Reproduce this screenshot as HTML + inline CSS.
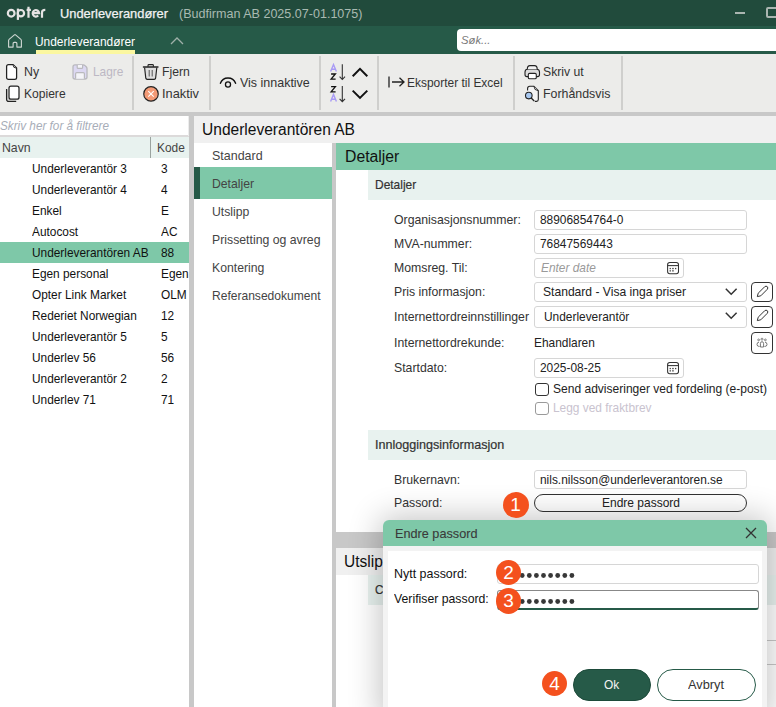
<!DOCTYPE html>
<html><head><meta charset="utf-8"><style>
html,body{margin:0;padding:0;width:776px;height:707px;overflow:hidden;background:#fff;font-family:"Liberation Sans", sans-serif;position:relative}
</style></head><body>
<div style="position:absolute;left:0px;top:0px;width:776px;height:26px;background:#214b3c;"></div>
<svg style="position:absolute;left:0px;top:0px;" width="56" height="26" viewBox="0 0 56 26"><g fill="none" stroke="#e6e4e4" stroke-width="2.2"><circle cx="11.2" cy="13.2" r="3.35"/><path d="M17.9 8.6 V19.9"/><circle cx="20.9" cy="13.2" r="3.2"/><path d="M28.5 6.8 V17.8 M26.6 9.9 H30.9"/><path d="M32.7 13.2 H39.1 A3.2 3.2 0 1 0 38.2 15.6"/><path d="M42 17.8 V12.4 Q42 9.9 45.3 9.9"/></g></svg>
<div style="position:absolute;left:59.80px;top:8.00px;line-height:12.6px;font-size:12.6px;color:#f2f2f2;font-weight:normal;font-style:normal;white-space:nowrap;transform-origin:0 0;transform:scaleX(1.0217);-webkit-text-stroke:0.25px #f2f2f2;">Underleverandører</div>
<div style="position:absolute;left:179.00px;top:8.00px;line-height:12.6px;font-size:12.6px;color:#a9bab2;font-weight:normal;font-style:normal;white-space:nowrap;transform-origin:0 0;transform:scaleX(0.9965);">(Budfirman AB 2025.07-01.1075)</div>
<div style="position:absolute;left:735px;top:12px;width:10px;height:2px;background:#aab5b0;"></div>
<div style="position:absolute;left:766px;top:7px;width:12px;height:11px;background:transparent;border:2px solid #aab5b0;box-sizing:border-box;border-radius:2px"></div>
<div style="position:absolute;left:0px;top:26px;width:776px;height:28px;background:#265a48;"></div>
<svg style="position:absolute;left:7px;top:32.5px;" width="16" height="16" viewBox="0 0 16 16"><path d="M1.6 14.1 V7.4 Q1.6 6.8 2.1 6.4 L7.4 1.9 Q8 1.4 8.6 1.9 L13.9 6.4 Q14.4 6.8 14.4 7.4 V14.1 H9.9 V10.4 Q9.9 9.4 8.9 9.4 H7.1 Q6.1 9.4 6.1 10.4 V14.1 Z" fill="none" stroke="#cdd5d1" stroke-width="1.15" stroke-linejoin="round"/></svg>
<div style="position:absolute;left:35.00px;top:36.00px;line-height:12.6px;font-size:12.6px;color:#ffffff;font-weight:normal;font-style:normal;white-space:nowrap;transform-origin:0 0;transform:scaleX(0.9460);">Underleverandører</div>
<div style="position:absolute;left:36px;top:50px;width:99px;height:4px;background:#fbf7a0;"></div>
<svg style="position:absolute;left:170px;top:36px;" width="14" height="10" viewBox="0 0 14 10"><path d="M1 8 L7 2 L13 8" fill="none" stroke="#9fb0a9" stroke-width="1.3"/></svg>
<div style="position:absolute;left:457px;top:29px;width:330px;height:22px;background:#ffffff;border-radius:4px"></div>
<div style="position:absolute;left:461.30px;top:35.00px;line-height:11.8px;font-size:11.8px;color:#7a7a7a;font-weight:normal;font-style:italic;white-space:nowrap;transform-origin:0 0;transform:scaleX(0.9574);">Søk...</div>
<div style="position:absolute;left:0px;top:54px;width:776px;height:58px;background:#ececea;"></div>
<div style="position:absolute;left:0px;top:112px;width:776px;height:4px;background:#c8c8c8;"></div>
<div style="position:absolute;left:132px;top:56px;width:2px;height:54px;background:#cfcfcd;"></div>
<div style="position:absolute;left:209px;top:56px;width:2px;height:54px;background:#cfcfcd;"></div>
<div style="position:absolute;left:319px;top:56px;width:2px;height:54px;background:#cfcfcd;"></div>
<div style="position:absolute;left:377px;top:56px;width:2px;height:54px;background:#cfcfcd;"></div>
<div style="position:absolute;left:513px;top:56px;width:2px;height:54px;background:#cfcfcd;"></div>
<div style="position:absolute;left:621px;top:56px;width:2px;height:54px;background:#cfcfcd;"></div>
<svg style="position:absolute;left:5px;top:63px;" width="14" height="18" viewBox="0 0 14 18"><path d="M3.5 1.6 H8.2 L11.6 5 V14.5 Q11.6 16.4 9.7 16.4 H3.5 Q1.6 16.4 1.6 14.5 V3.5 Q1.6 1.6 3.5 1.6 Z" fill="#fff" stroke="#222" stroke-width="1.25" stroke-linejoin="round"/><path d="M8 1.8 Q8 5 11.4 5.2" fill="#e8e8e8" stroke="#222" stroke-width="0.9"/></svg>
<div style="position:absolute;left:24.40px;top:66.00px;line-height:12.4px;font-size:12.4px;color:#333;font-weight:normal;font-style:normal;white-space:nowrap;transform-origin:0 0;transform:scaleX(0.9963);">Ny</div>
<svg style="position:absolute;left:68px;top:60px;" width="24" height="24" viewBox="68 60 24 24"><path d="M75 64.8 H83.2 Q84.2 64.8 85 65.6 L86.2 66.8 Q87 67.6 87 68.6 V77 Q87 79 85 79 H75 Q73 79 73 77 V66.8 Q73 64.8 75 64.8 Z" fill="#dcd8f2" stroke="#b9b9bd" stroke-width="1.3"/><path d="M77.2 65 V67.4 Q77.2 68.4 78.2 68.4 H81.6 Q82.6 68.4 82.6 67.4 V65" fill="#f4f4f8" stroke="#b9b9bd" stroke-width="1.2"/><path d="M75.6 78.8 V73.8 Q75.6 72.6 76.8 72.6 H83.2 Q84.4 72.6 84.4 73.8 V78.8" fill="#f4f4f8" stroke="#b9b9bd" stroke-width="1.2"/></svg>
<div style="position:absolute;left:92.60px;top:66.00px;line-height:12.4px;font-size:12.4px;color:#bcb8c4;font-weight:normal;font-style:normal;white-space:nowrap;transform-origin:0 0;transform:scaleX(0.9589);">Lagre</div>
<svg style="position:absolute;left:5px;top:85px;" width="16" height="18" viewBox="0 0 16 18"><rect x="4" y="1.2" width="10" height="13" rx="2" fill="#fff" stroke="#222" stroke-width="1.25"/><path d="M1.6 4 V14.2 Q1.6 16.4 3.8 16.4 H11.2" fill="none" stroke="#222" stroke-width="1.25"/><path d="M2.6 4.8 V14 Q2.6 15.4 4 15.4" fill="none" stroke="#aaa" stroke-width="0.8"/></svg>
<div style="position:absolute;left:24.00px;top:88.00px;line-height:12.4px;font-size:12.4px;color:#333;font-weight:normal;font-style:normal;white-space:nowrap;transform-origin:0 0;transform:scaleX(0.9738);">Kopiere</div>
<svg style="position:absolute;left:140px;top:60px;" width="22" height="24" viewBox="140 60 22 24"><path d="M144.6 67.6 L145.8 78.2 Q146 79.4 147.2 79.4 H154.2 Q155.4 79.4 155.6 78.2 L156.8 67.6" fill="#dedede" stroke="#222" stroke-width="1.15" stroke-linejoin="round"/><path d="M143.4 67 H158" stroke="#222" stroke-width="1.3" stroke-linecap="round"/><path d="M148 66.8 V65.5 Q148 64.6 148.9 64.6 H152.5 Q153.4 64.6 153.4 65.5 V66.8" fill="none" stroke="#222" stroke-width="1.1"/><path d="M149.2 70 V76.5 M152.2 70 V76.5" stroke="#555" stroke-width="1"/></svg>
<div style="position:absolute;left:162.00px;top:66.00px;line-height:12.4px;font-size:12.4px;color:#333;font-weight:normal;font-style:normal;white-space:nowrap;transform-origin:0 0;transform:scaleX(0.9846);">Fjern</div>
<svg style="position:absolute;left:140px;top:82px;" width="22" height="24" viewBox="140 82 22 24"><circle cx="151" cy="93.9" r="7.25" fill="#f39a76" stroke="#222" stroke-width="1.15"/><path d="M148.3 91.2 L153.7 96.6 M153.7 91.2 L148.3 96.6" stroke="#fff" stroke-width="1.1"/></svg>
<div style="position:absolute;left:162.00px;top:88.00px;line-height:12.4px;font-size:12.4px;color:#333;font-weight:normal;font-style:normal;white-space:nowrap;transform-origin:0 0;transform:scaleX(1.0332);">Inaktiv</div>
<svg style="position:absolute;left:214px;top:70px;" width="28" height="22" viewBox="214 70 28 22"><path d="M220.4 83.3 A8.1 8.1 0 0 1 235.6 83.3" fill="none" stroke="#111" stroke-width="1.4" stroke-linecap="round"/><circle cx="228" cy="84.5" r="2.55" fill="none" stroke="#111" stroke-width="1.3"/></svg>
<div style="position:absolute;left:240.00px;top:77.00px;line-height:12.4px;font-size:12.4px;color:#333;font-weight:normal;font-style:normal;white-space:nowrap;transform-origin:0 0;transform:scaleX(1.0066);">Vis innaktive</div>
<svg style="position:absolute;left:325px;top:60px;" width="50" height="45" viewBox="325 60 50 45"><path d="M330.6 71.6 L333.5 64.6 L336.4 71.6 M331.5 69.3 H335.5" fill="none" stroke="#a99bf5" stroke-width="1.4"/><path d="M331.1 74 H335.4 L331.1 79.1 H335.6" fill="none" stroke="#111" stroke-width="1.3"/><path d="M342.3 64.3 V79.4 M339.6 76.6 L342.3 79.5 L345 76.6" fill="none" stroke="#333" stroke-width="1.1"/><path d="M331.1 86.6 H335.4 L331.1 91.9 H335.6" fill="none" stroke="#111" stroke-width="1.3"/><path d="M330.6 101.6 L333.5 94.4 L336.4 101.6 M331.5 99.2 H335.5" fill="none" stroke="#a99bf5" stroke-width="1.4"/><path d="M342.3 86 V101.6 M339.6 98.8 L342.3 101.7 L345 98.8" fill="none" stroke="#333" stroke-width="1.1"/><path d="M352.7 76.2 L360 68.9 L367.3 76.2" fill="none" stroke="#111" stroke-width="2"/><path d="M352.7 90.6 L360 97.9 L367.3 90.6" fill="none" stroke="#111" stroke-width="2"/></svg>
<svg style="position:absolute;left:387px;top:75px;" width="19" height="14" viewBox="0 0 19 14"><path d="M2 1.5 V12.5" stroke="#222" stroke-width="1.3"/><path d="M5 7 H17 M12.5 2.8 L17 7 L12.5 11.2" fill="none" stroke="#222" stroke-width="1.3"/></svg>
<div style="position:absolute;left:407.40px;top:77.00px;line-height:12.4px;font-size:12.4px;color:#333;font-weight:normal;font-style:normal;white-space:nowrap;transform-origin:0 0;transform:scaleX(0.9641);">Eksporter til Excel</div>
<svg style="position:absolute;left:520px;top:60px;" width="24" height="24" viewBox="520 60 24 24"><path d="M525 72 Q525 69.2 527.8 69.2 H536.4 Q539.5 69.2 539.5 72 V74.5 Q539.5 76.6 537.4 76.6 H527 Q525 76.6 525 74.5 Z" fill="#dcdcdc" stroke="#222" stroke-width="1.1"/><path d="M527.3 69.2 Q527.3 65.6 530 65.6 H534.5 Q537.2 65.6 537.2 69.2" fill="#f2f2f2" stroke="#222" stroke-width="1.1"/><rect x="528.3" y="73.4" width="8" height="5.3" rx="1.3" fill="#fff" stroke="#222" stroke-width="1.1"/></svg>
<div style="position:absolute;left:543.30px;top:66.00px;line-height:12.4px;font-size:12.4px;color:#333;font-weight:normal;font-style:normal;white-space:nowrap;transform-origin:0 0;transform:scaleX(0.9852);">Skriv ut</div>
<svg style="position:absolute;left:520px;top:82px;" width="24" height="24" viewBox="520 82 24 24"><path d="M527.6 90.5 V88.5 Q527.6 86.3 529.8 86.3 H534 L538.3 90.6 V99.6 Q538.3 101.4 536.5 101.4 H534.8" fill="#f4f4f4" stroke="#222" stroke-width="1.1" stroke-linejoin="round"/><path d="M534 86.5 Q534 90.3 538 90.6" fill="#ddd" stroke="#222" stroke-width="0.9"/><circle cx="528.8" cy="95.6" r="3.3" fill="#a8c8f0" stroke="#222" stroke-width="1.1"/><path d="M531.2 98 L534.2 101" stroke="#222" stroke-width="1.3"/></svg>
<div style="position:absolute;left:543.30px;top:88.00px;line-height:12.4px;font-size:12.4px;color:#333;font-weight:normal;font-style:normal;white-space:nowrap;transform-origin:0 0;transform:scaleX(0.9985);">Forhåndsvis</div>
<div style="position:absolute;left:0px;top:116px;width:190px;height:591px;background:#ffffff;"></div>
<div style="position:absolute;left:0.30px;top:120.00px;line-height:12.4px;font-size:12.4px;color:#a7adb8;font-weight:normal;font-style:italic;white-space:nowrap;transform-origin:0 0;transform:scaleX(0.9478);">Skriv her for å filtrere</div>
<div style="position:absolute;left:0px;top:135px;width:189px;height:2px;background:#dcdada;"></div>
<div style="position:absolute;left:188px;top:116px;width:1px;height:20px;background:#ececec;"></div>
<div style="position:absolute;left:0px;top:137px;width:190px;height:21px;background:#e8f2ef;"></div>
<div style="position:absolute;left:2.00px;top:142.00px;line-height:12.4px;font-size:12.4px;color:#444;font-weight:normal;font-style:normal;white-space:nowrap;transform-origin:0 0;transform:scaleX(0.9918);">Navn</div>
<div style="position:absolute;left:150px;top:137px;width:1px;height:21px;background:#9aa39f;"></div>
<div style="position:absolute;left:157.40px;top:142.00px;line-height:12.4px;font-size:12.4px;color:#444;font-weight:normal;font-style:normal;white-space:nowrap;transform-origin:0 0;transform:scaleX(0.9600);">Kode</div>
<div style="position:absolute;left:31.50px;top:163.00px;line-height:12.4px;font-size:12.4px;color:#111;font-weight:normal;font-style:normal;white-space:nowrap;transform-origin:0 0;transform:scaleX(0.9570);">Underleverantör 3</div>
<div style="position:absolute;left:161.00px;top:163.00px;line-height:12.4px;font-size:12.4px;color:#111;font-weight:normal;font-style:normal;white-space:nowrap;transform-origin:0 0;transform:scaleX(0.9570);">3</div>
<div style="position:absolute;left:31.50px;top:184.00px;line-height:12.4px;font-size:12.4px;color:#111;font-weight:normal;font-style:normal;white-space:nowrap;transform-origin:0 0;transform:scaleX(0.9570);">Underleverantör 4</div>
<div style="position:absolute;left:161.00px;top:184.00px;line-height:12.4px;font-size:12.4px;color:#111;font-weight:normal;font-style:normal;white-space:nowrap;transform-origin:0 0;transform:scaleX(0.9570);">4</div>
<div style="position:absolute;left:31.50px;top:205.00px;line-height:12.4px;font-size:12.4px;color:#111;font-weight:normal;font-style:normal;white-space:nowrap;transform-origin:0 0;transform:scaleX(0.9570);">Enkel</div>
<div style="position:absolute;left:161.00px;top:205.00px;line-height:12.4px;font-size:12.4px;color:#111;font-weight:normal;font-style:normal;white-space:nowrap;transform-origin:0 0;transform:scaleX(0.9570);">E</div>
<div style="position:absolute;left:31.50px;top:226.00px;line-height:12.4px;font-size:12.4px;color:#111;font-weight:normal;font-style:normal;white-space:nowrap;transform-origin:0 0;transform:scaleX(0.9570);">Autocost</div>
<div style="position:absolute;left:161.00px;top:226.00px;line-height:12.4px;font-size:12.4px;color:#111;font-weight:normal;font-style:normal;white-space:nowrap;transform-origin:0 0;transform:scaleX(0.9570);">AC</div>
<div style="position:absolute;left:0px;top:242px;width:190px;height:21px;background:#7ec8a8;"></div>
<div style="position:absolute;left:31.50px;top:247.00px;line-height:12.4px;font-size:12.4px;color:#111;font-weight:normal;font-style:normal;white-space:nowrap;transform-origin:0 0;transform:scaleX(0.9570);">Underleverantören AB</div>
<div style="position:absolute;left:161.00px;top:247.00px;line-height:12.4px;font-size:12.4px;color:#111;font-weight:normal;font-style:normal;white-space:nowrap;transform-origin:0 0;transform:scaleX(0.9570);">88</div>
<div style="position:absolute;left:31.50px;top:268.00px;line-height:12.4px;font-size:12.4px;color:#111;font-weight:normal;font-style:normal;white-space:nowrap;transform-origin:0 0;transform:scaleX(0.9570);">Egen personal</div>
<div style="position:absolute;left:161.00px;top:268.00px;line-height:12.4px;font-size:12.4px;color:#111;font-weight:normal;font-style:normal;white-space:nowrap;transform-origin:0 0;transform:scaleX(0.9570);">Egen</div>
<div style="position:absolute;left:31.50px;top:289.00px;line-height:12.4px;font-size:12.4px;color:#111;font-weight:normal;font-style:normal;white-space:nowrap;transform-origin:0 0;transform:scaleX(0.9570);">Opter Link Market</div>
<div style="position:absolute;left:161.00px;top:289.00px;line-height:12.4px;font-size:12.4px;color:#111;font-weight:normal;font-style:normal;white-space:nowrap;transform-origin:0 0;transform:scaleX(0.9570);">OLM</div>
<div style="position:absolute;left:31.50px;top:310.00px;line-height:12.4px;font-size:12.4px;color:#111;font-weight:normal;font-style:normal;white-space:nowrap;transform-origin:0 0;transform:scaleX(0.9570);">Rederiet Norwegian</div>
<div style="position:absolute;left:161.00px;top:310.00px;line-height:12.4px;font-size:12.4px;color:#111;font-weight:normal;font-style:normal;white-space:nowrap;transform-origin:0 0;transform:scaleX(0.9570);">12</div>
<div style="position:absolute;left:31.50px;top:331.00px;line-height:12.4px;font-size:12.4px;color:#111;font-weight:normal;font-style:normal;white-space:nowrap;transform-origin:0 0;transform:scaleX(0.9570);">Underleverantör 5</div>
<div style="position:absolute;left:161.00px;top:331.00px;line-height:12.4px;font-size:12.4px;color:#111;font-weight:normal;font-style:normal;white-space:nowrap;transform-origin:0 0;transform:scaleX(0.9570);">5</div>
<div style="position:absolute;left:31.50px;top:352.00px;line-height:12.4px;font-size:12.4px;color:#111;font-weight:normal;font-style:normal;white-space:nowrap;transform-origin:0 0;transform:scaleX(0.9570);">Underlev 56</div>
<div style="position:absolute;left:161.00px;top:352.00px;line-height:12.4px;font-size:12.4px;color:#111;font-weight:normal;font-style:normal;white-space:nowrap;transform-origin:0 0;transform:scaleX(0.9570);">56</div>
<div style="position:absolute;left:31.50px;top:373.00px;line-height:12.4px;font-size:12.4px;color:#111;font-weight:normal;font-style:normal;white-space:nowrap;transform-origin:0 0;transform:scaleX(0.9570);">Underleverantör 2</div>
<div style="position:absolute;left:161.00px;top:373.00px;line-height:12.4px;font-size:12.4px;color:#111;font-weight:normal;font-style:normal;white-space:nowrap;transform-origin:0 0;transform:scaleX(0.9570);">2</div>
<div style="position:absolute;left:31.50px;top:394.00px;line-height:12.4px;font-size:12.4px;color:#111;font-weight:normal;font-style:normal;white-space:nowrap;transform-origin:0 0;transform:scaleX(0.9570);">Underlev 71</div>
<div style="position:absolute;left:161.00px;top:394.00px;line-height:12.4px;font-size:12.4px;color:#111;font-weight:normal;font-style:normal;white-space:nowrap;transform-origin:0 0;transform:scaleX(0.9570);">71</div>
<div style="position:absolute;left:189px;top:116px;width:5px;height:591px;background:#c8c8c8;"></div>
<div style="position:absolute;left:194px;top:116px;width:582px;height:27px;background:#f0f0f0;"></div>
<div style="position:absolute;left:201.70px;top:122.00px;line-height:15.8px;font-size:15.8px;color:#111;font-weight:normal;font-style:normal;white-space:nowrap;transform-origin:0 0;transform:scaleX(0.9843);">Underleverantören AB</div>
<div style="position:absolute;left:194px;top:143px;width:138px;height:564px;background:#ffffff;"></div>
<div style="position:absolute;left:212.00px;top:150.00px;line-height:12.4px;font-size:12.4px;color:#444;font-weight:normal;font-style:normal;white-space:nowrap;transform-origin:0 0;transform:scaleX(1.0060);">Standard</div>
<div style="position:absolute;left:194px;top:167px;width:138px;height:32px;background:#7ec8a8;"></div>
<div style="position:absolute;left:194px;top:167px;width:6px;height:32px;background:#265a48;"></div>
<div style="position:absolute;left:212.00px;top:178.00px;line-height:12.4px;font-size:12.4px;color:#444;font-weight:normal;font-style:normal;white-space:nowrap;transform-origin:0 0;transform:scaleX(0.9860);">Detaljer</div>
<div style="position:absolute;left:212.00px;top:206.00px;line-height:12.4px;font-size:12.4px;color:#444;font-weight:normal;font-style:normal;white-space:nowrap;transform-origin:0 0;transform:scaleX(0.9860);">Utslipp</div>
<div style="position:absolute;left:212.00px;top:234.00px;line-height:12.4px;font-size:12.4px;color:#444;font-weight:normal;font-style:normal;white-space:nowrap;transform-origin:0 0;transform:scaleX(0.9907);">Prissetting og avreg</div>
<div style="position:absolute;left:212.00px;top:262.00px;line-height:12.4px;font-size:12.4px;color:#444;font-weight:normal;font-style:normal;white-space:nowrap;transform-origin:0 0;transform:scaleX(0.9860);">Kontering</div>
<div style="position:absolute;left:212.00px;top:290.00px;line-height:12.4px;font-size:12.4px;color:#444;font-weight:normal;font-style:normal;white-space:nowrap;transform-origin:0 0;transform:scaleX(0.9723);">Referansedokument</div>
<div style="position:absolute;left:332px;top:143px;width:4px;height:564px;background:#c8c8c8;"></div>
<div style="position:absolute;left:336px;top:143px;width:440px;height:27px;background:#7ec8a8;"></div>
<div style="position:absolute;left:344.50px;top:149.00px;line-height:16px;font-size:16px;color:#111;font-weight:normal;font-style:normal;white-space:nowrap;transform-origin:0 0;transform:scaleX(0.9848);">Detaljer</div>
<div style="position:absolute;left:336px;top:170px;width:440px;height:362px;background:#ffffff;"></div>
<div style="position:absolute;left:368px;top:170px;width:408px;height:30px;background:#e8f2ef;"></div>
<div style="position:absolute;left:375.40px;top:179.00px;line-height:12.4px;font-size:12.4px;color:#333;font-weight:normal;font-style:normal;white-space:nowrap;transform-origin:0 0;transform:scaleX(0.9648);-webkit-text-stroke:0.2px #333;">Detaljer</div>
<div style="position:absolute;left:393.60px;top:214.00px;line-height:12.4px;font-size:12.4px;color:#333;font-weight:normal;font-style:normal;white-space:nowrap;transform-origin:0 0;transform:scaleX(0.9900);">Organisasjonsnummer:</div>
<div style="position:absolute;left:393.60px;top:238.00px;line-height:12.4px;font-size:12.4px;color:#333;font-weight:normal;font-style:normal;white-space:nowrap;transform-origin:0 0;transform:scaleX(0.9900);">MVA-nummer:</div>
<div style="position:absolute;left:393.60px;top:262.00px;line-height:12.4px;font-size:12.4px;color:#333;font-weight:normal;font-style:normal;white-space:nowrap;transform-origin:0 0;transform:scaleX(0.9900);">Momsreg. Til:</div>
<div style="position:absolute;left:393.60px;top:286.00px;line-height:12.4px;font-size:12.4px;color:#333;font-weight:normal;font-style:normal;white-space:nowrap;transform-origin:0 0;transform:scaleX(0.9900);">Pris informasjon:</div>
<div style="position:absolute;left:393.60px;top:311.00px;line-height:12.4px;font-size:12.4px;color:#333;font-weight:normal;font-style:normal;white-space:nowrap;transform-origin:0 0;transform:scaleX(0.9900);">Internettordreinnstillinger</div>
<div style="position:absolute;left:393.60px;top:337.00px;line-height:12.4px;font-size:12.4px;color:#333;font-weight:normal;font-style:normal;white-space:nowrap;transform-origin:0 0;transform:scaleX(0.9900);">Internettordrekunde:</div>
<div style="position:absolute;left:393.60px;top:362.00px;line-height:12.4px;font-size:12.4px;color:#333;font-weight:normal;font-style:normal;white-space:nowrap;transform-origin:0 0;transform:scaleX(0.9900);">Startdato:</div>
<div style="position:absolute;left:534px;top:210px;width:213px;height:20px;background:#fff;border:1px solid #d6d6d6;box-sizing:border-box;border-radius:3px"></div>
<div style="position:absolute;left:540.30px;top:214.00px;line-height:12.4px;font-size:12.4px;color:#222;font-weight:normal;font-style:normal;white-space:nowrap;transform-origin:0 0;transform:scaleX(0.9600);">88906854764-0</div>
<div style="position:absolute;left:534px;top:234px;width:213px;height:20px;background:#fff;border:1px solid #d6d6d6;box-sizing:border-box;border-radius:3px"></div>
<div style="position:absolute;left:540.30px;top:238.00px;line-height:12.4px;font-size:12.4px;color:#222;font-weight:normal;font-style:normal;white-space:nowrap;transform-origin:0 0;transform:scaleX(0.9600);">76847569443</div>
<div style="position:absolute;left:534px;top:258px;width:150px;height:20px;background:#fff;border:1px solid #d6d6d6;box-sizing:border-box;border-radius:3px"></div>
<div style="position:absolute;left:541.30px;top:262.00px;line-height:12.4px;font-size:12.4px;color:#9a9a9a;font-weight:normal;font-style:italic;white-space:nowrap;transform-origin:0 0;transform:scaleX(0.9600);">Enter date</div>
<svg style="position:absolute;left:664px;top:259px;" width="18" height="18" viewBox="664 259 18 18"><rect x="667.6" y="262.5" width="10.9" height="11.2" rx="2.2" fill="none" stroke="#333" stroke-width="1.05"/><path d="M667.6 265.6 H678.5" stroke="#333" stroke-width="1.05"/><g fill="#444"><rect x="669.6" y="267.9" width="1.3" height="1.3"/><rect x="672.2" y="267.9" width="1.5" height="1.3"/><rect x="675" y="267.9" width="1.3" height="1.3"/><rect x="669.6" y="270.2" width="1.3" height="1.3"/><rect x="672.2" y="270.2" width="1.5" height="1.3"/></g></svg>
<div style="position:absolute;left:534px;top:282px;width:213px;height:20px;background:#fff;border:1px solid #d6d6d6;box-sizing:border-box;border-radius:3px"></div>
<div style="position:absolute;left:543.30px;top:286.00px;line-height:12.4px;font-size:12.4px;color:#222;font-weight:normal;font-style:normal;white-space:nowrap;transform-origin:0 0;transform:scaleX(0.9762);">Standard - Visa inga priser</div>
<svg style="position:absolute;left:720px;top:286.8px;" width="22" height="12" viewBox="720 286.8 22 12"><path d="M725.8 288.6 L731.2 294.0 L736.6 288.6" fill="none" stroke="#333" stroke-width="1.5"/></svg>
<div style="position:absolute;left:534px;top:306px;width:213px;height:21.5px;background:#fff;border:1px solid #d6d6d6;box-sizing:border-box;border-radius:3px"></div>
<div style="position:absolute;left:543.50px;top:311.00px;line-height:12.4px;font-size:12.4px;color:#222;font-weight:normal;font-style:normal;white-space:nowrap;transform-origin:0 0;transform:scaleX(0.9600);">Underleverantör</div>
<svg style="position:absolute;left:720px;top:311.3px;" width="22" height="12" viewBox="720 311.3 22 12"><path d="M725.8 313.1 L731.2 318.5 L736.6 313.1" fill="none" stroke="#333" stroke-width="1.5"/></svg>
<div style="position:absolute;left:751px;top:282px;width:22px;height:20px;background:#fff;border:1px solid #333;box-sizing:border-box;border-radius:4px"></div>
<svg style="position:absolute;left:751px;top:282px;" width="22" height="21" viewBox="751 282 22 21"><path d="M757.3 296.6 L758.2 293.2 L764.6 286.8 Q766.1 285.5 767.3 286.7 Q768.5 287.9 767.2 289.4 L760.8 295.8 Z" fill="none" stroke="#333" stroke-width="1" stroke-linejoin="round"/></svg>
<div style="position:absolute;left:751px;top:306px;width:22px;height:21.5px;background:#fff;border:1px solid #333;box-sizing:border-box;border-radius:4px"></div>
<svg style="position:absolute;left:751px;top:306px;" width="22" height="21" viewBox="751 306 22 21"><path d="M757.3 320.6 L758.2 317.2 L764.6 310.8 Q766.1 309.5 767.3 310.7 Q768.5 311.9 767.2 313.4 L760.8 319.8 Z" fill="none" stroke="#333" stroke-width="1" stroke-linejoin="round"/></svg>
<div style="position:absolute;left:751px;top:332px;width:22px;height:21.6px;background:#fff;border:1px solid #333;box-sizing:border-box;border-radius:4px"></div>
<svg style="position:absolute;left:751px;top:332px;" width="22" height="22" viewBox="751 332 22 22"><circle cx="758.6" cy="339.9" r="0.9" fill="none" stroke="#555" stroke-width="0.7"/><circle cx="762" cy="339.2" r="1" fill="none" stroke="#555" stroke-width="0.7"/><circle cx="765.4" cy="339.9" r="0.9" fill="none" stroke="#555" stroke-width="0.7"/><path d="M760.4 347 V343.6 Q760.4 341.7 762 341.7 Q763.6 341.7 763.6 343.6 V347 Z" fill="none" stroke="#555" stroke-width="0.8"/><path d="M759.5 346.5 Q757 346.5 757 344.5 Q757 342.2 759 342.2 M764.5 346.5 Q767 346.5 767 344.5 Q767 342.2 765 342.2" fill="none" stroke="#555" stroke-width="0.8"/></svg>
<div style="position:absolute;left:534.30px;top:337.00px;line-height:12.4px;font-size:12.4px;color:#222;font-weight:normal;font-style:normal;white-space:nowrap;transform-origin:0 0;transform:scaleX(0.9600);">Ehandlaren</div>
<div style="position:absolute;left:534px;top:358px;width:150px;height:20px;background:#fff;border:1px solid #d6d6d6;box-sizing:border-box;border-radius:3px"></div>
<div style="position:absolute;left:539.60px;top:362.00px;line-height:12.4px;font-size:12.4px;color:#222;font-weight:normal;font-style:normal;white-space:nowrap;transform-origin:0 0;transform:scaleX(0.9600);">2025-08-25</div>
<svg style="position:absolute;left:664px;top:359px;" width="18" height="18" viewBox="664 359 18 18"><rect x="667.6" y="362.5" width="10.9" height="11.2" rx="2.2" fill="none" stroke="#333" stroke-width="1.05"/><path d="M667.6 365.6 H678.5" stroke="#333" stroke-width="1.05"/><g fill="#444"><rect x="669.6" y="367.9" width="1.3" height="1.3"/><rect x="672.2" y="367.9" width="1.5" height="1.3"/><rect x="675" y="367.9" width="1.3" height="1.3"/><rect x="669.6" y="370.2" width="1.3" height="1.3"/><rect x="672.2" y="370.2" width="1.5" height="1.3"/></g></svg>
<div style="position:absolute;left:535px;top:383.2px;width:14px;height:12.6px;background:#fff;border:1.2px solid #333;box-sizing:border-box;border-radius:3px"></div>
<div style="position:absolute;left:553.40px;top:383.00px;line-height:12.4px;font-size:12.4px;color:#222;font-weight:normal;font-style:normal;white-space:nowrap;transform-origin:0 0;transform:scaleX(0.9709);">Send adviseringer ved fordeling (e-post)</div>
<div style="position:absolute;left:535px;top:402.3px;width:14px;height:12.6px;background:#fff;border:1.2px solid #9a9a9a;box-sizing:border-box;border-radius:3px"></div>
<div style="position:absolute;left:553.40px;top:402.00px;line-height:12.4px;font-size:12.4px;color:#c9c3cf;font-weight:normal;font-style:normal;white-space:nowrap;transform-origin:0 0;transform:scaleX(0.9600);">Legg ved fraktbrev</div>
<div style="position:absolute;left:368px;top:430px;width:408px;height:30px;background:#e8f2ef;"></div>
<div style="position:absolute;left:375.40px;top:439.00px;line-height:12.4px;font-size:12.4px;color:#333;font-weight:normal;font-style:normal;white-space:nowrap;transform-origin:0 0;transform:scaleX(1.0146);-webkit-text-stroke:0.2px #333;">Innloggingsinformasjon</div>
<div style="position:absolute;left:393.60px;top:474.00px;line-height:12.4px;font-size:12.4px;color:#333;font-weight:normal;font-style:normal;white-space:nowrap;transform-origin:0 0;transform:scaleX(0.9900);">Brukernavn:</div>
<div style="position:absolute;left:393.60px;top:497.00px;line-height:12.4px;font-size:12.4px;color:#333;font-weight:normal;font-style:normal;white-space:nowrap;transform-origin:0 0;transform:scaleX(0.9900);">Passord:</div>
<div style="position:absolute;left:534px;top:470px;width:213px;height:19px;background:#fff;border:1px solid #d6d6d6;box-sizing:border-box;border-radius:3px"></div>
<div style="position:absolute;left:540.30px;top:474.00px;line-height:12.4px;font-size:12.4px;color:#222;font-weight:normal;font-style:normal;white-space:nowrap;transform-origin:0 0;transform:scaleX(0.9600);">nils.nilsson@underleverantoren.se</div>
<div style="position:absolute;left:534px;top:494px;width:213px;height:18px;background:#fff;border:1.2px solid #333;box-sizing:border-box;border-radius:9px"></div>
<div style="position:absolute;left:602.00px;top:497.00px;line-height:12.4px;font-size:12.4px;color:#222;font-weight:normal;font-style:normal;white-space:nowrap;transform-origin:0 0;transform:scaleX(0.9678);">Endre passord</div>
<div style="position:absolute;left:336px;top:532px;width:440px;height:16px;background:#c8c8c8;"></div>
<div style="position:absolute;left:336px;top:548px;width:440px;height:27px;background:#f0f0f0;"></div>
<div style="position:absolute;left:344.00px;top:554.00px;line-height:16px;font-size:16px;color:#111;font-weight:normal;font-style:normal;white-space:nowrap;transform-origin:0 0;transform:scaleX(0.9700);">Utslipp</div>
<div style="position:absolute;left:336px;top:575px;width:440px;height:132px;background:#ffffff;"></div>
<div style="position:absolute;left:368px;top:575px;width:408px;height:30px;background:#e8f2ef;"></div>
<div style="position:absolute;left:375.40px;top:584.00px;line-height:12.4px;font-size:12.4px;color:#333;font-weight:normal;font-style:normal;white-space:nowrap;transform-origin:0 0;transform:scaleX(0.9400);-webkit-text-stroke:0.2px #333;">CO2</div>
<div style="position:absolute;left:767px;top:640px;width:9px;height:1px;background:#c8c8c8;"></div>
<div style="position:absolute;left:767px;top:664px;width:9px;height:1px;background:#c8c8c8;"></div>
<div style="position:absolute;left:383px;top:520px;width:384px;height:200px;border-radius:6px 6px 0 0;box-shadow:0 0 32px 3px rgba(0,0,0,0.24);background:#f3f3f3"></div>
<div style="position:absolute;left:383px;top:520px;width:384px;height:25.7px;background:#7ec8a8;border-radius:6px 6px 0 0"></div>
<div style="position:absolute;left:394.80px;top:528.00px;line-height:12.4px;font-size:12.4px;color:#3a3a3a;font-weight:normal;font-style:normal;white-space:nowrap;transform-origin:0 0;transform:scaleX(1.0237);-webkit-text-stroke:0.1px #3a3a3a;">Endre passord</div>
<svg style="position:absolute;left:745px;top:527px;" width="12" height="12" viewBox="0 0 12 12"><path d="M1 1 L11 11 M11 1 L1 11" stroke="#333" stroke-width="1.3"/></svg>
<div style="position:absolute;left:388px;top:551px;width:374px;height:160px;background:#ffffff;"></div>
<div style="position:absolute;left:393.80px;top:568.00px;line-height:12.4px;font-size:12.4px;color:#111;font-weight:normal;font-style:normal;white-space:nowrap;transform-origin:0 0;transform:scaleX(1.0041);">Nytt passord:</div>
<div style="position:absolute;left:393.80px;top:593.00px;line-height:12.4px;font-size:12.4px;color:#111;font-weight:normal;font-style:normal;white-space:nowrap;transform-origin:0 0;transform:scaleX(0.9900);">Verifiser passord:</div>
<div style="position:absolute;left:497px;top:564px;width:262px;height:20px;background:#fff;border:1px solid #d6d6d6;box-sizing:border-box;border-radius:3px"></div>
<div style="position:absolute;left:497px;top:590px;width:262px;height:19.5px;background:#fff;border:1px solid #888;border-bottom:2px solid #265a48;box-sizing:border-box;border-radius:3px"></div>
<svg style="position:absolute;left:511.5px;top:572.5px;" width="70" height="5" viewBox="0 0 70 5"><circle cx="3.10" cy="2.5" r="2.4" fill="#383838"/><circle cx="10.20" cy="2.5" r="2.4" fill="#383838"/><circle cx="17.30" cy="2.5" r="2.4" fill="#383838"/><circle cx="24.40" cy="2.5" r="2.4" fill="#383838"/><circle cx="31.50" cy="2.5" r="2.4" fill="#383838"/><circle cx="38.60" cy="2.5" r="2.4" fill="#383838"/><circle cx="45.70" cy="2.5" r="2.4" fill="#383838"/><circle cx="52.80" cy="2.5" r="2.4" fill="#383838"/><circle cx="59.90" cy="2.5" r="2.4" fill="#383838"/></svg>
<svg style="position:absolute;left:511.5px;top:598.7px;" width="70" height="5" viewBox="0 0 70 5"><circle cx="3.10" cy="2.5" r="2.4" fill="#383838"/><circle cx="10.20" cy="2.5" r="2.4" fill="#383838"/><circle cx="17.30" cy="2.5" r="2.4" fill="#383838"/><circle cx="24.40" cy="2.5" r="2.4" fill="#383838"/><circle cx="31.50" cy="2.5" r="2.4" fill="#383838"/><circle cx="38.60" cy="2.5" r="2.4" fill="#383838"/><circle cx="45.70" cy="2.5" r="2.4" fill="#383838"/><circle cx="52.80" cy="2.5" r="2.4" fill="#383838"/><circle cx="59.90" cy="2.5" r="2.4" fill="#383838"/></svg>
<div style="position:absolute;left:573px;top:669px;width:78px;height:32px;background:#265a48;border-radius:16px;border:1px solid #1d4a3a;box-sizing:border-box"></div>
<div style="position:absolute;left:603.80px;top:679.00px;line-height:12.4px;font-size:12.4px;color:#f4f4f4;font-weight:normal;font-style:normal;white-space:nowrap;transform-origin:0 0;transform:scaleX(0.9600);">Ok</div>
<div style="position:absolute;left:657px;top:669px;width:99px;height:32px;background:#fff;border:1px solid #265a48;box-sizing:border-box;border-radius:16px"></div>
<div style="position:absolute;left:688.00px;top:679.00px;line-height:12.4px;font-size:12.4px;color:#333;font-weight:normal;font-style:normal;white-space:nowrap;transform-origin:0 0;transform:scaleX(1.0313);">Avbryt</div>
<div style="position:absolute;left:502.6px;top:492.0px;width:26px;height:26px;border-radius:50%;background:#f4511e;color:#fff;font-size:19px;line-height:26px;text-align:center">1</div>
<div style="position:absolute;left:495.75px;top:559.95px;width:25.5px;height:25.5px;border-radius:50%;background:#f4511e;color:#fff;font-size:19px;line-height:25.5px;text-align:center">2</div>
<div style="position:absolute;left:495.75px;top:588.05px;width:25.5px;height:25.5px;border-radius:50%;background:#f4511e;color:#fff;font-size:19px;line-height:25.5px;text-align:center">3</div>
<div style="position:absolute;left:541.75px;top:670.95px;width:25.5px;height:25.5px;border-radius:50%;background:#f4511e;color:#fff;font-size:19px;line-height:25.5px;text-align:center">4</div>
</body></html>
